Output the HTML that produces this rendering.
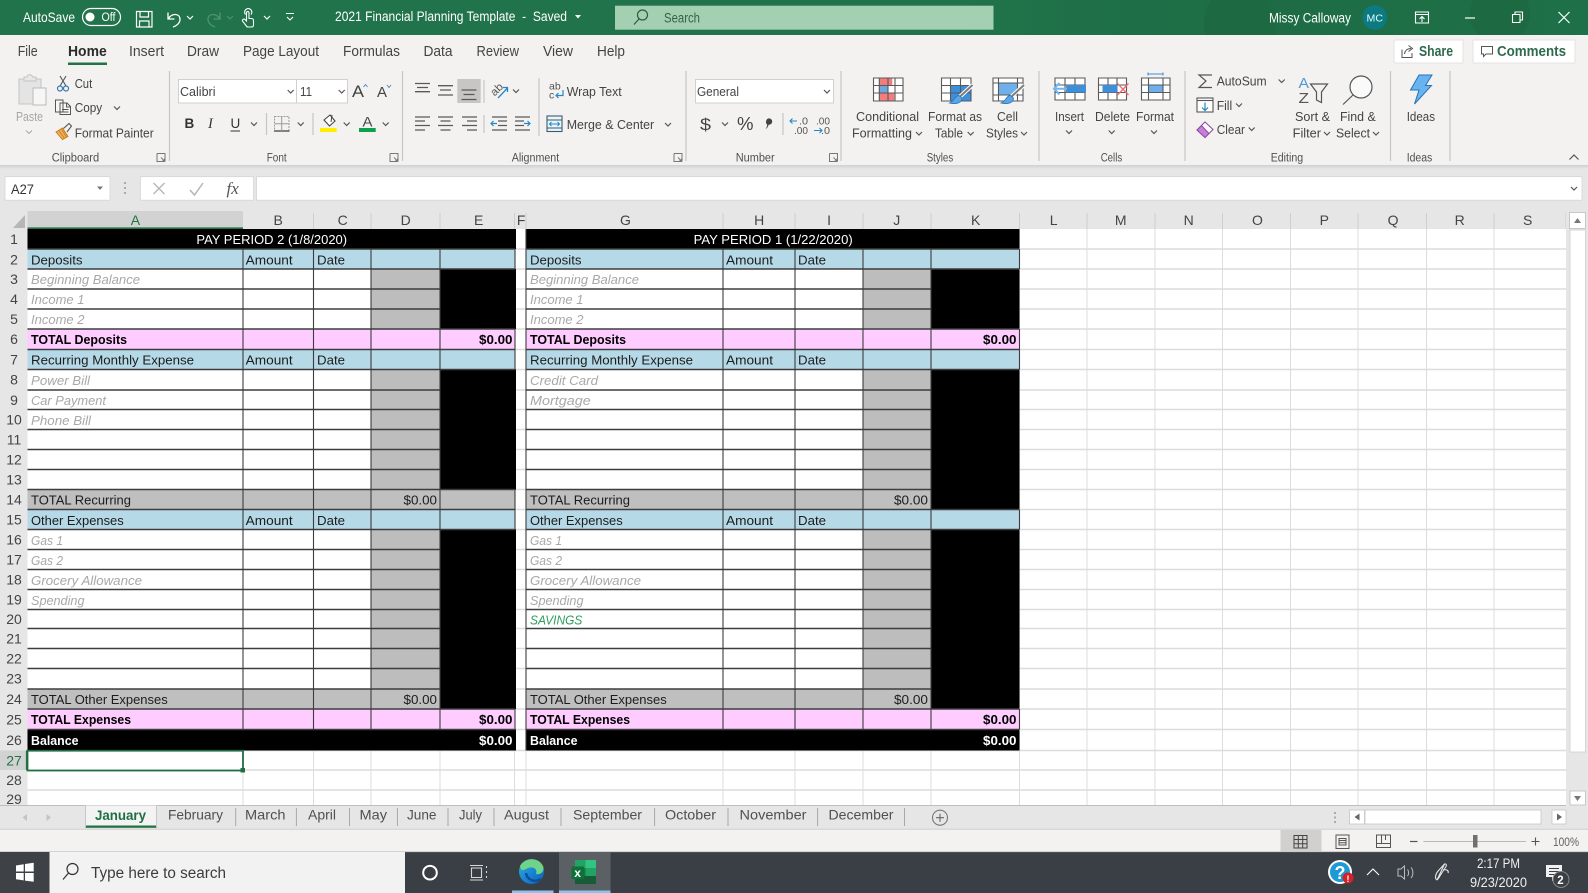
<!DOCTYPE html>
<html lang="en"><head><meta charset="utf-8"><title>2021 Financial Planning Template - Excel</title>
<style>
html,body{margin:0;padding:0;background:#f3f2f1;overflow:hidden;width:1588px;height:893px}
svg{display:block}
text{font-family:"Liberation Sans",sans-serif}
.c{font-size:13px;fill:#1c1c1c}
.i{font-size:13px;fill:#a8a8a8;font-style:italic}
.b{font-size:13px;fill:#000;font-weight:bold}
.w{font-size:13px;fill:#fff;font-weight:bold}
.h{font-size:14px;fill:#444}
.r{font-size:12.5px;fill:#444}
.l{font-size:11.5px;fill:#505050}
.t{font-size:14.5px;fill:#444}
.s{font-size:14px;fill:#505050}
.k{fill:none;stroke:#555;stroke-width:1.2}
.g{fill:none;stroke:#5a5a5a;stroke-width:1.3}
.se{font-family:"Liberation Serif",serif}
</style></head><body>
<svg xmlns="http://www.w3.org/2000/svg" width="1588" height="893" viewBox="0 0 1588 893">
<defs>
<path id="ch" d="M-3 -1.5L0 1.5L3 -1.5" fill="none" stroke="#555" stroke-width="1.2"/>
<path id="cw" d="M-3 -1.5L0 1.5L3 -1.5" fill="none" stroke="#fff" stroke-width="1.2"/>
<path id="la" d="M-4 -4H4V4M-4 -4V4H4M0 0L3.5 3.5M3.5 1V3.5H1" fill="none" stroke="#777" stroke-width="1"/>
<linearGradient id="sh" x1="0" y1="0" x2="0" y2="1"><stop offset="0" stop-color="#cfcfcf"/><stop offset="1" stop-color="#e6e6e6"/></linearGradient>
<linearGradient id="tb" x1="0" y1="0" x2="1" y2="0"><stop offset="0" stop-color="#20734a"/><stop offset=".6" stop-color="#20734a"/><stop offset=".8" stop-color="#1d6c45"/><stop offset="1" stop-color="#1e7048"/></linearGradient>
<linearGradient id="edge" x1="0" y1="0" x2="1" y2="1"><stop offset="0" stop-color="#2fb5c8"/><stop offset=".5" stop-color="#1a86d6"/><stop offset="1" stop-color="#0f5fb0"/></linearGradient>
<clipPath id="tc"><rect width="1588" height="35"/></clipPath>
</defs>

<!-- base -->
<rect width="1588" height="893" fill="#f3f2f1"/>

<!-- title bar -->
<rect width="1588" height="35" fill="url(#tb)"/>
<g clip-path="url(#tc)">
<circle cx="1500" cy="14" r="30" fill="#1c6942"/>
<circle cx="1240" cy="22" r="36" fill="#1c6942"/>
</g>
<text x="23" y="22" font-size="14" fill="#fff" textLength="52" lengthAdjust="spacingAndGlyphs">AutoSave</text>
<rect x="82.5" y="8.5" width="38" height="17" rx="8.5" fill="none" stroke="#fff" stroke-width="1.2"/>
<circle cx="90" cy="17" r="4.5" fill="#fff"/>
<text x="101.5" y="21" font-size="11.5" fill="#fff" textLength="14" lengthAdjust="spacingAndGlyphs">Off</text>
<path d="M136.5 11.5H152V27H136.5ZM140 11.5V17H148.5V11.5M139.5 27V21H149V27" fill="none" stroke="#fff" stroke-width="1.2"/>
<path d="M168 12.5V19H174.5M168.5 18.5C172 13 180 13 180 19.5C180 23 176.5 26 173 27" fill="none" stroke="#fff" stroke-width="1.3"/>
<use href="#cw" x="190" y="17.5"/>
<path d="M220 12.5V19H213.5M219.5 18.5C216 13 208 13 208 19.5C208 23 211.5 26 215 27" fill="none" stroke="#4f9471" stroke-width="1.3"/>
<path d="M227 16L230 19L233 16" fill="none" stroke="#4f9471" stroke-width="1.1"/>
<path d="M245.5 14.5a3.6 3.6 0 1 1 5.5 0M246.5 21V13c0-2 2.500-2 2.500 0V18.500h2.500c1.500 0 2 1 2 2.500V25c0 1.500-1 2-2 2h-3.500c-1 0-1.500-.5-2-1.500L242.500 21c-.5-1.500 1.500-2.500 2.500-1.500Z" fill="none" stroke="#fff" stroke-width="1.1"/>
<use href="#cw" x="267" y="17.5"/>
<path d="M286 13.500H294M287 17L290 20L293 17" fill="none" stroke="#fff" stroke-width="1.1"/>
<text x="335" y="21" font-size="13.500" fill="#fff" textLength="232" lengthAdjust="spacingAndGlyphs">2021 Financial Planning Template &#160;-&#160; Saved</text>
<path d="M575 15H581L578 18.500Z" fill="#fff"/>
<rect x="615" y="5.700" width="378.500" height="24" fill="#a3d0b1"/>
<circle cx="642.500" cy="15" r="5" fill="none" stroke="#2f5a44" stroke-width="1.200"/>
<path d="M639 19L634 24.500" stroke="#2f5a44" stroke-width="1.200"/>
<text x="664" y="22.500" font-size="13.500" fill="#36614a" textLength="36" lengthAdjust="spacingAndGlyphs">Search</text>
<text x="1269" y="22.500" font-size="13.500" fill="#fff" textLength="82" lengthAdjust="spacingAndGlyphs">Missy Calloway</text>
<circle cx="1374.700" cy="17.500" r="12.300" fill="#0d7a82"/>
<text x="1366.500" y="21.500" font-size="10.500" fill="#dff" textLength="16.500" lengthAdjust="spacingAndGlyphs">MC</text>
<path d="M1415.500 12H1428.500V23H1415.500ZM1415.500 14.500H1428.500M1422 22V16.500M1419.500 19L1422 16.500L1424.500 19" fill="none" stroke="#fff" stroke-width="1.100"/>
<path d="M1465 18H1475" stroke="#fff" stroke-width="1.200"/>
<path d="M1512.500 14.500H1520V22.500H1512.500ZM1515 14.500V12H1522.500V20H1520" fill="none" stroke="#fff" stroke-width="1.100"/>
<path d="M1558.500 12L1569.500 23M1569.500 12L1558.500 23" stroke="#fff" stroke-width="1.200"/>

<!-- ribbon tabs -->
<text class="t" x="17.700" y="56" textLength="20" lengthAdjust="spacingAndGlyphs">File</text>
<text class="t" x="68" y="56" textLength="38.700" lengthAdjust="spacingAndGlyphs" style="fill:#2b2b2b;font-weight:bold">Home</text>
<rect x="68" y="62.500" width="39" height="2.500" fill="#217346"/>
<text class="t" x="129" y="56" textLength="35" lengthAdjust="spacingAndGlyphs">Insert</text>
<text class="t" x="187" y="56" textLength="32" lengthAdjust="spacingAndGlyphs">Draw</text>
<text class="t" x="243" y="56" textLength="76" lengthAdjust="spacingAndGlyphs">Page Layout</text>
<text class="t" x="343" y="56" textLength="57" lengthAdjust="spacingAndGlyphs">Formulas</text>
<text class="t" x="423.500" y="56" textLength="29" lengthAdjust="spacingAndGlyphs">Data</text>
<text class="t" x="476.500" y="56" textLength="42.500" lengthAdjust="spacingAndGlyphs">Review</text>
<text class="t" x="543" y="56" textLength="30" lengthAdjust="spacingAndGlyphs">View</text>
<text class="t" x="597" y="56" textLength="28" lengthAdjust="spacingAndGlyphs">Help</text>
<rect x="1394" y="40" width="69" height="23" rx="1" fill="#fff" stroke="#e4e2e0"/>
<path d="M1402 49.500V57.500H1412V53M1404.500 54C1405 50.500 1407.500 48.500 1411 48.500M1408.500 45.500L1412.500 48.500L1408.500 51.500" fill="none" stroke="#555" stroke-width="1"/>
<text x="1419" y="56" font-size="14.500" font-weight="bold" fill="#2f6a4d" textLength="34" lengthAdjust="spacingAndGlyphs">Share</text>
<rect x="1473" y="40" width="102" height="23" rx="1" fill="#fff" stroke="#e4e2e0"/>
<path d="M1481.500 46.500H1492.500V54H1486L1483.500 56.500V54H1481.500Z" fill="none" stroke="#555" stroke-width="1"/>
<text x="1497" y="56" font-size="14.500" font-weight="bold" fill="#2f6a4d" textLength="69" lengthAdjust="spacingAndGlyphs">Comments</text>

<!-- ribbon separators -->
<path d="M169.500 71V161M402.500 71V161M484 80V103M484 115V133M539 78V136M686 71V161M783 113V135M841 71V161M1039 71V161M1185 71V161M1390.500 71V161M1450 71V161M266.500 113V135M313 113V135" stroke="#c8c6c4" stroke-width="1.200" fill="none"/>

<!-- clipboard -->
<rect x="19" y="79" width="22" height="25" fill="#e4e4e4" stroke="#c4c4c4"/>
<path d="M24 80V77H27C27.500 74 32 74 32.500 77H36V81H24Z" fill="#e8e8e8" stroke="#c4c4c4"/>
<rect x="33" y="88" width="13" height="17" fill="#f6f6f6" stroke="#bbb"/>
<text x="16" y="121" font-size="12.500" fill="#a6a6a6" textLength="27" lengthAdjust="spacingAndGlyphs">Paste</text>
<path d="M26 130.500L29 133.500L32 130.500" fill="none" stroke="#aaa" stroke-width="1.100"/>
<path d="M60 76L66 86M66 76L60 86" stroke="#555" stroke-width="1.100"/>
<circle cx="60" cy="88.500" r="2.500" fill="none" stroke="#3a78b8" stroke-width="1.200"/><circle cx="66" cy="88.500" r="2.500" fill="none" stroke="#3a78b8" stroke-width="1.200"/>
<text class="r" x="74.700" y="88" textLength="17.500" lengthAdjust="spacingAndGlyphs">Cut</text>
<path d="M55.500 100H63V112H55.500ZM60 103H67L70.500 106.500V114.500H60ZM66.500 103V107H70.500M62 109.500H68.500M62 112H68.500" fill="#f7f7f7" stroke="#555" stroke-width="1"/>
<text class="r" x="74.700" y="112" textLength="27.500" lengthAdjust="spacingAndGlyphs">Copy</text>
<use href="#ch" x="117" y="108"/>
<path d="M56 132L62.500 128L68 136.500L62.500 139.500Z" fill="#eeb05a" stroke="#c77b1d" stroke-width=".9"/>
<path d="M59 130.500L64.500 138.500M61.500 129L66.500 137" stroke="#c77b1d" stroke-width=".8"/>
<path d="M63.500 128.500L69 123.500L71.500 126L67 132" fill="none" stroke="#555" stroke-width="1.100"/>
<text class="r" x="74.700" y="137.500" textLength="79" lengthAdjust="spacingAndGlyphs">Format Painter</text>
<text class="l" x="51.700" y="161.500" textLength="47.500" lengthAdjust="spacingAndGlyphs">Clipboard</text>
<use href="#la" x="161" y="157.500"/>

<!-- font -->
<rect x="178.500" y="79.500" width="118" height="23.500" fill="#fff" stroke="#d2d0ce"/>
<rect x="296.500" y="79.500" width="51" height="23.500" fill="#fff" stroke="#d2d0ce"/>
<text class="r" x="180" y="96" textLength="35.500" lengthAdjust="spacingAndGlyphs">Calibri</text>
<use href="#ch" x="290.700" y="91.500"/>
<text class="r" x="300" y="96" textLength="12" lengthAdjust="spacingAndGlyphs">11</text>
<use href="#ch" x="341.700" y="91.500"/>
<text x="352" y="97" font-size="17" fill="#444" textLength="12" lengthAdjust="spacingAndGlyphs">A</text>
<path d="M363.500 87L365.500 84.500L367.500 87" fill="none" stroke="#4a8ec4" stroke-width="1"/>
<text x="377" y="97" font-size="14.500" fill="#444" textLength="10" lengthAdjust="spacingAndGlyphs">A</text>
<path d="M387 85L389 87.500L391 85" fill="none" stroke="#4a8ec4" stroke-width="1"/>
<text x="184.500" y="128" font-size="13.500" font-weight="bold" fill="#333">B</text>
<text class="se" x="208" y="128" font-size="14.500" font-style="italic" fill="#333">I</text>
<text x="230.500" y="128" font-size="13.500" fill="#333">U</text>
<path d="M230.500 131H240" stroke="#333" stroke-width="1"/>
<use href="#ch" x="254" y="124"/>
<path d="M274.500 116.500H289V131H274.500Z" fill="none" stroke="#9a9a9a" stroke-width="1" stroke-dasharray="2 1"/>
<path d="M274 131H289.500" stroke="#444" stroke-width="1.300"/>
<path d="M281.700 117V131M275 123.700H288.500" stroke="#9a9a9a" stroke-width="1"/>
<use href="#ch" x="300.700" y="124"/>
<path d="M324 120L330 115L335 121L329.500 126Z" fill="#fff" stroke="#444" stroke-width="1.100"/>
<path d="M332 115L331 122" stroke="#444" stroke-width="1"/>
<rect x="320" y="128" width="16.700" height="4" fill="#ffee00"/>
<use href="#ch" x="346.700" y="124"/>
<text x="362.500" y="126.500" font-size="14" fill="#444" textLength="10" lengthAdjust="spacingAndGlyphs">A</text>
<rect x="359" y="128" width="16.700" height="4" fill="#0fa04c"/>
<use href="#ch" x="385.700" y="124"/>
<text class="l" x="266.700" y="161.500" textLength="20" lengthAdjust="spacingAndGlyphs">Font</text>
<use href="#la" x="394" y="157.500"/>

<!-- alignment -->
<rect x="457.300" y="79" width="23.400" height="24" fill="#c8c6c4"/>
<path class="g" d="M415 83.500H430M417 87.500H428M415 91.700H430M438 85.700H453M440 90H451M438 95H453M461.500 90H476.500M463.500 94.500H474.500M461.500 99.500H476.500"/>
<path class="g" d="M415 117H430M415 121H425M415 125.500H430M415 130H425M438 117H453M440.500 121H450.500M438 125.500H453M440.500 130H450.500M462 117H477M467 121H477M462 125.500H477M467 130H477M492 117H507M498 121H507M498 125.500H507M492 130H507M515 117H530M515 121H524M515 125.500H524M515 130H530"/>
<path d="M491 123.500H497M493.500 121L491 123.500L493.500 126M524 123.500H530M527.500 121L530 123.500L527.500 126" fill="none" stroke="#2487c8" stroke-width="1.200"/>
<text x="491.500" y="95" font-size="11" fill="#555" transform="rotate(-45 495 92)" textLength="13" lengthAdjust="spacingAndGlyphs">ab</text>
<path d="M498 98L507.500 88M503 87.500H507.500V92" fill="none" stroke="#2487c8" stroke-width="1.300"/>
<use href="#ch" x="516" y="91"/>
<text x="549" y="89.500" font-size="10.500" fill="#555">ab</text>
<text x="549" y="98.500" font-size="10.500" fill="#555">c</text>
<path d="M563 90V95.500H556M558.500 93L556 95.500L558.500 98" fill="none" stroke="#2487c8" stroke-width="1.200"/>
<text class="r" x="566.700" y="96" textLength="55" lengthAdjust="spacingAndGlyphs">Wrap Text</text>
<rect x="547" y="116" width="15" height="15.500" fill="#eaf4fb" stroke="#3a5a70" stroke-width="1.100"/>
<path d="M547 120H562M547 128H562" stroke="#3a5a70" stroke-width="1"/>
<path d="M549.500 124H559.500M551.500 122L549.500 124L551.500 126M557.500 122L559.500 124L557.500 126" fill="none" stroke="#2487c8" stroke-width="1"/>
<text class="r" x="566.700" y="129" textLength="87.500" lengthAdjust="spacingAndGlyphs">Merge &amp; Center</text>
<use href="#ch" x="668" y="124.500"/>
<text class="l" x="511.700" y="161.500" textLength="47.500" lengthAdjust="spacingAndGlyphs">Alignment</text>
<use href="#la" x="678" y="157.500"/>

<!-- number -->
<rect x="695.500" y="79.500" width="138" height="23.500" fill="#fff" stroke="#d2d0ce"/>
<text class="r" x="697" y="96" textLength="42" lengthAdjust="spacingAndGlyphs">General</text>
<use href="#ch" x="827" y="91.500"/>
<text x="700" y="130" font-size="17" fill="#444" textLength="11" lengthAdjust="spacingAndGlyphs">$</text>
<use href="#ch" x="725" y="124"/>
<text x="737" y="130" font-size="18" fill="#444" textLength="16.500" lengthAdjust="spacingAndGlyphs">%</text>
<path d="M768 118.500a3.200 3.200 0 1 1 .5 6.200c-.2 2-1.500 3.500-3 4.500c1-1.500 1.700-3 1.700-4.700c-1.700-.8-1.800-4.800.8-6Z" fill="#444"/>
<text x="799" y="124.500" font-size="10.500" fill="#555" textLength="9" lengthAdjust="spacingAndGlyphs">.0</text>
<text x="794" y="134" font-size="10.500" fill="#555" textLength="14" lengthAdjust="spacingAndGlyphs">.00</text>
<path d="M790 121H797M792.500 118.500L790 121L792.500 123.500" fill="none" stroke="#2487c8" stroke-width="1.100"/>
<text x="816" y="124.500" font-size="10.500" fill="#555" textLength="14" lengthAdjust="spacingAndGlyphs">.00</text>
<text x="821" y="134" font-size="10.500" fill="#555" textLength="9" lengthAdjust="spacingAndGlyphs">.0</text>
<path d="M814 130.500H822M819.500 128L822 130.500L819.500 133" fill="none" stroke="#2487c8" stroke-width="1.100"/>
<text class="l" x="735.700" y="161.500" textLength="39" lengthAdjust="spacingAndGlyphs">Number</text>
<use href="#la" x="833.500" y="157.500"/>

<!-- styles: conditional -->
<rect x="873.500" y="78" width="29.500" height="23" fill="#fff"/>
<rect x="879.300" y="78" width="13" height="7.500" fill="#f47c7c"/>
<rect x="879.300" y="85.500" width="9" height="7.500" fill="#6ea8dc"/>
<rect x="879.300" y="93" width="15" height="8" fill="#f47c7c"/>
<path d="M873.500 78H903V101H873.500ZM873.500 85.500H903M873.500 93H903M879.300 78V101M888 78V101M895 78V101" fill="none" stroke="#5a5a5a" stroke-width="1.100"/>
<text class="r" x="856" y="121" textLength="63" lengthAdjust="spacingAndGlyphs">Conditional</text>
<text class="r" x="852" y="137.500" textLength="60" lengthAdjust="spacingAndGlyphs">Formatting</text>
<use href="#ch" x="919" y="133.500"/>
<!-- format as table -->
<rect x="941.500" y="78" width="29.500" height="23" fill="#fff"/>
<rect x="950.500" y="85.500" width="20.500" height="15.500" fill="#3d8fd9"/>
<path d="M941.500 78H971V101H941.500ZM941.500 85.500H971M941.500 93H971M950.500 78V101M960.500 78V101" fill="none" stroke="#5a5a5a" stroke-width="1.100"/>
<path d="M972.500 85L958.500 98" stroke="#fff" stroke-width="4"/>
<path d="M972.500 85L958.500 98" stroke="#7d7d7d" stroke-width="2"/>
<path d="M959 95.500C954 96 955 101 949.500 103C956 104.500 962 103 962 98Z" fill="#5aa6e6" stroke="#2b72b5" stroke-width=".8"/>
<text class="r" x="928" y="121" textLength="54" lengthAdjust="spacingAndGlyphs">Format as</text>
<text class="r" x="935" y="137.500" textLength="28" lengthAdjust="spacingAndGlyphs">Table</text>
<use href="#ch" x="970.700" y="133.500"/>
<!-- cell styles -->
<rect x="993" y="78" width="30" height="23" fill="#fff"/>
<rect x="998.500" y="83" width="19" height="12" fill="#6db0ec"/>
<path d="M993 78H1023V101H993ZM993 83H1023M993 95H1023M998.500 78V101M1017.500 78V101" fill="none" stroke="#5a5a5a" stroke-width="1.100"/>
<path d="M1024 85L1010 98" stroke="#fff" stroke-width="4"/>
<path d="M1024 85L1010 98" stroke="#7d7d7d" stroke-width="2"/>
<path d="M1010.500 95.500C1005.500 96 1006.500 101 1001 103C1007.500 104.500 1013.500 103 1013.500 98Z" fill="#5aa6e6" stroke="#2b72b5" stroke-width=".8"/>
<text class="r" x="997" y="121" textLength="21" lengthAdjust="spacingAndGlyphs">Cell</text>
<text class="r" x="986" y="137.500" textLength="32" lengthAdjust="spacingAndGlyphs">Styles</text>
<use href="#ch" x="1024" y="133.500"/>
<text class="l" x="926.700" y="161.500" textLength="26.500" lengthAdjust="spacingAndGlyphs">Styles</text>

<!-- cells -->
<rect x="1055" y="78" width="30" height="22" fill="#fff"/>
<path d="M1055 78H1085V100H1055ZM1055 85H1085M1055 92.500H1085M1065 78V100M1075 78V100" fill="none" stroke="#5a5a5a" stroke-width="1.100"/>
<rect x="1066" y="85" width="20" height="7.500" fill="#3d8fd9"/>
<path d="M1054 88.700H1067M1059.500 83L1054 88.700L1059.500 94.500" fill="none" stroke="#6eb6ee" stroke-width="2"/>
<rect x="1098.500" y="78" width="28" height="22" fill="#fff"/>
<path d="M1098.500 78H1126.500V100H1098.500ZM1098.500 85H1126.500M1098.500 92.500H1126.500M1108 78V100M1117 78V100" fill="none" stroke="#5a5a5a" stroke-width="1.100"/>
<rect x="1102.500" y="85" width="15" height="7.500" fill="#3d8fd9"/>
<path d="M1117.500 83.500L1128.500 95M1128.500 83.500L1117.500 95" stroke="#ee6e6e" stroke-width="1.400"/>
<rect x="1141.500" y="78" width="28.500" height="22" fill="#fff"/>
<rect x="1148.500" y="85" width="14.500" height="7.500" fill="#6db0ec"/>
<path d="M1141.500 78H1170V100H1141.500ZM1141.500 85H1170M1141.500 92.500H1170M1148.500 78V100M1163 78V100" fill="none" stroke="#5a5a5a" stroke-width="1.100"/>
<path d="M1148 74H1163M1148 72.500V75.500M1163 72.500V75.500" stroke="#3d8fd9" stroke-width="1.100"/>
<text class="r" x="1055" y="121" textLength="29" lengthAdjust="spacingAndGlyphs">Insert</text>
<text class="r" x="1095" y="121" textLength="35" lengthAdjust="spacingAndGlyphs">Delete</text>
<text class="r" x="1136" y="121" textLength="38" lengthAdjust="spacingAndGlyphs">Format</text>
<use href="#ch" x="1069" y="132"/><use href="#ch" x="1111.700" y="132"/><use href="#ch" x="1154" y="132"/>
<text class="l" x="1100.700" y="161.500" textLength="21.500" lengthAdjust="spacingAndGlyphs">Cells</text>

<!-- editing -->
<path d="M1212 75H1199L1206 81L1199 87.500H1212" fill="none" stroke="#555" stroke-width="1.200"/>
<text class="r" x="1216.700" y="85.500" textLength="50" lengthAdjust="spacingAndGlyphs">AutoSum</text>
<use href="#ch" x="1281.700" y="81"/>
<rect x="1197" y="98" width="16" height="14" fill="#fff" stroke="#555" stroke-width="1.100"/>
<path d="M1197 100.500H1213" stroke="#555" stroke-width="1.100"/>
<path d="M1205 102.500V110M1202 107.500L1205 110.500L1208 107.500" fill="none" stroke="#2487c8" stroke-width="1.200"/>
<text class="r" x="1216.700" y="110" textLength="15.500" lengthAdjust="spacingAndGlyphs">Fill</text>
<use href="#ch" x="1239" y="105"/>
<path d="M1197 130L1205 122L1213 129.500L1205 137.500Z" fill="#fff" stroke="#8a4fa8" stroke-width="1.100"/>
<path d="M1197 130L1201.500 125.500L1209 133.500L1205 137.500Z" fill="#c77ed4" stroke="#8a4fa8" stroke-width="1"/>
<text class="r" x="1216.700" y="134" textLength="28.300" lengthAdjust="spacingAndGlyphs">Clear</text>
<use href="#ch" x="1251.700" y="129"/>
<text x="1298.500" y="88" font-size="14.500" fill="#4a9ad8" textLength="10.500" lengthAdjust="spacingAndGlyphs">A</text>
<text x="1298.500" y="103" font-size="14.500" fill="#555" textLength="10.500" lengthAdjust="spacingAndGlyphs">Z</text>
<path d="M1310.500 84H1327.500L1321.500 92V102.500L1316.500 100V92Z" fill="none" stroke="#555" stroke-width="1.200"/>
<text class="r" x="1295" y="121" textLength="35" lengthAdjust="spacingAndGlyphs">Sort &amp;</text>
<text class="r" x="1292.700" y="137.500" textLength="28.300" lengthAdjust="spacingAndGlyphs">Filter</text>
<use href="#ch" x="1327" y="133.500"/>
<circle cx="1361" cy="87" r="11" fill="#fafafa" stroke="#555" stroke-width="1.200"/>
<path d="M1353 95L1343 104.500" stroke="#555" stroke-width="1.200"/>
<text class="r" x="1340" y="121" textLength="35.700" lengthAdjust="spacingAndGlyphs">Find &amp;</text>
<text class="r" x="1336" y="137.500" textLength="34" lengthAdjust="spacingAndGlyphs">Select</text>
<use href="#ch" x="1376" y="133.500"/>
<text class="l" x="1270.700" y="161.500" textLength="32.500" lengthAdjust="spacingAndGlyphs">Editing</text>
<path d="M1419 75H1432L1425.500 85.500H1431.500L1414.500 104L1419 90H1410.500Z" fill="#68b4f0" stroke="#2b72b5" stroke-width="1"/>
<text class="r" x="1406.700" y="121" textLength="28.300" lengthAdjust="spacingAndGlyphs">Ideas</text>
<text class="l" x="1406.700" y="161.500" textLength="25.600" lengthAdjust="spacingAndGlyphs">Ideas</text>
<path d="M1569.500 159.500L1574 155L1578.500 159.500" fill="none" stroke="#555" stroke-width="1.200"/>

<!-- formula bar -->
<rect y="165" width="1588" height="46" fill="#e6e6e6"/>
<rect y="165" width="1588" height="4" fill="url(#sh)"/>
<rect x="5" y="176.700" width="105" height="23.500" fill="#fff" stroke="#d6d6d6" stroke-width=".8"/>
<text x="11" y="194" font-size="13.500" fill="#333" textLength="23" lengthAdjust="spacingAndGlyphs">A27</text>
<path d="M97 186.500H103L100 190Z" fill="#777"/>
<path d="M125 182V184M125 187V189M125 192V194" stroke="#aaa" stroke-width="2"/>
<rect x="140.500" y="176.700" width="113" height="23.500" fill="#fff" stroke="#d6d6d6" stroke-width=".8"/>
<path d="M153.500 183L164.500 194M164.500 183L153.500 194" stroke="#b5b5b5" stroke-width="1.300"/>
<path d="M190 190L194.500 195L203 183" fill="none" stroke="#b5b5b5" stroke-width="1.500"/>
<text class="se" x="226.500" y="194" font-size="17" font-style="italic" fill="#555">fx</text>
<rect x="256.600" y="176.700" width="1325.400" height="23.500" fill="#fff" stroke="#d6d6d6" stroke-width=".8"/>
<use href="#ch" x="1574" y="188.500"/>

<!-- column headers -->
<rect y="211" width="1566" height="18" fill="#e6e6e6"/>
<rect x="27.500" y="211" width="215.500" height="18" fill="#d2d2d2"/>
<path d="M27.500 228.200H243" stroke="#217346" stroke-width="1.600"/>
<path d="M13 228L25 228L25 215Z" fill="#b6b6b6"/>
<path d="M313.500 213V229M371 213V229M440 213V229M514.500 213V229M526 213V229M723 213V229M795 213V229M863 213V229M931 213V229M1019.500 213V229M1087 213V229M1155 213V229M1222.500 213V229M1290.500 213V229M1358 213V229M1426.500 213V229M1494 213V229M1566 213V229" stroke="#cfcfcf"/>
<g class="h" text-anchor="middle" transform="translate(.7 0)">
<text x="134.700" y="225" style="fill:#217346">A</text><text x="277.500" y="225">B</text><text x="342" y="225">C</text><text x="405" y="225">D</text><text x="478" y="225">E</text><text x="520.500" y="225">F</text><text x="624.800" y="225">G</text><text x="758.500" y="225">H</text><text x="828.400" y="225">I</text><text x="896" y="225">J</text><text x="975" y="225">K</text><text x="1053" y="225">L</text><text x="1120" y="225">M</text><text x="1188" y="225">N</text><text x="1256.700" y="225">O</text><text x="1323.600" y="225">P</text><text x="1392.400" y="225">Q</text><text x="1459" y="225">R</text><text x="1527" y="225">S</text>
</g>

<!-- row headers -->
<rect y="229" width="27.500" height="576" fill="#e6e6e6"/>
<rect y="750.500" width="27.500" height="19.500" fill="#d2d2d2"/>
<path d="M26.700 750.500V770" stroke="#217346" stroke-width="1.600"/>
<g class="h" text-anchor="middle" transform="translate(.4 0)">
<text x="13.600" y="244">1</text><text x="13.600" y="264.500">2</text><text x="13.600" y="284">3</text><text x="13.600" y="304">4</text><text x="13.600" y="324">5</text><text x="13.600" y="344">6</text><text x="13.600" y="364.500">7</text><text x="13.600" y="384.500">8</text><text x="13.600" y="405">9</text><text x="13.600" y="424.500">10</text><text x="13.600" y="444.500">11</text><text x="13.600" y="464.500">12</text><text x="13.600" y="484.500">13</text><text x="13.600" y="504.500">14</text><text x="13.600" y="524.500">15</text><text x="13.600" y="544.500">16</text><text x="13.600" y="564.500">17</text><text x="13.600" y="584.500">18</text><text x="13.600" y="604.500">19</text><text x="13.600" y="624">20</text><text x="13.600" y="643.500">21</text><text x="13.600" y="663.500">22</text><text x="13.600" y="683.500">23</text><text x="13.600" y="704">24</text><text x="13.600" y="724.500">25</text><text x="13.600" y="745">26</text><text x="13.600" y="765.500" style="fill:#217346">27</text><text x="13.600" y="785">28</text><text x="13.600" y="804">29</text>
</g>

<!-- sheet -->
<rect x="27.500" y="229" width="1538.500" height="576" fill="#fff"/>
<path d="M27.500 249H1566M27.500 269H1566M27.500 289H1566M27.500 309H1566M27.500 329H1566M27.500 349.500H1566M27.500 369.500H1566M27.500 390H1566M27.500 409.500H1566M27.500 429.500H1566M27.500 449.500H1566M27.500 469.500H1566M27.500 489.500H1566M27.500 509.500H1566M27.500 529.500H1566M27.500 549.500H1566M27.500 569.500H1566M27.500 589.500H1566M27.500 609.500H1566M27.500 628.500H1566M27.500 648.500H1566M27.500 668.500H1566M27.500 689H1566M27.500 709H1566M27.500 729.500H1566M27.500 750.500H1566M27.500 770H1566M27.500 790H1566" stroke="#dcdcdc" stroke-width="1.500" fill="none"/>
<path d="M243 229V805M313.500 229V805M371 229V805M440 229V805M514.500 229V805M526 229V805M723 229V805M795 229V805M863 229V805M931 229V805M1019.500 229V805M1087 229V805M1155 229V805M1222.500 229V805M1290.500 229V805M1358 229V805M1426.500 229V805M1494 229V805" stroke="#dcdcdc" stroke-width="1" fill="none"/>

<!-- table 1 fills -->
<g>
<rect x="27.500" y="229" width="488.500" height="20" fill="#000"/>
<rect x="27.500" y="249" width="487.500" height="20" fill="#b5d9e7"/>
<rect x="27.500" y="349.500" width="487.500" height="20" fill="#b5d9e7"/>
<rect x="27.500" y="509.500" width="487.500" height="20" fill="#b5d9e7"/>
<rect x="27.500" y="269" width="412.500" height="60" fill="#fff"/>
<rect x="27.500" y="369.500" width="412.500" height="120" fill="#fff"/>
<rect x="27.500" y="529.500" width="412.500" height="159.500" fill="#fff"/>
<rect x="27.500" y="329" width="487.500" height="20.500" fill="#ffccff"/>
<rect x="27.500" y="709" width="487.500" height="20.500" fill="#ffccff"/>
<rect x="371" y="269" width="69" height="60" fill="#bdbdbd"/>
<rect x="371" y="369.500" width="69" height="120" fill="#bdbdbd"/>
<rect x="371" y="529.500" width="69" height="159.500" fill="#bdbdbd"/>
<rect x="440" y="269" width="76" height="60" fill="#000"/>
<rect x="440" y="369.500" width="76" height="120" fill="#000"/>
<rect x="440" y="529.500" width="76" height="179.500" fill="#000"/>
<rect x="27.500" y="489.500" width="487.500" height="20" fill="#bfbfbf"/>
<rect x="27.500" y="689" width="412.500" height="20" fill="#bfbfbf"/>
<rect x="27.500" y="729.500" width="488.500" height="21" fill="#000"/>
</g>
<!-- table 2 fills -->
<g>
<rect x="526" y="229" width="493.500" height="20" fill="#000"/>
<rect x="526" y="249" width="493.500" height="20" fill="#b5d9e7"/>
<rect x="526" y="349.500" width="493.500" height="20" fill="#b5d9e7"/>
<rect x="526" y="509.500" width="493.500" height="20" fill="#b5d9e7"/>
<rect x="526" y="329" width="493.500" height="20.500" fill="#ffccff"/>
<rect x="526" y="709" width="493.500" height="20.500" fill="#ffccff"/>
<rect x="526" y="269" width="405" height="60" fill="#fff"/>
<rect x="526" y="369.500" width="405" height="120" fill="#fff"/>
<rect x="526" y="529.500" width="405" height="159.500" fill="#fff"/>
<rect x="863" y="269" width="68" height="60" fill="#bdbdbd"/>
<rect x="863" y="369.500" width="68" height="120" fill="#bdbdbd"/>
<rect x="863" y="529.500" width="68" height="159.500" fill="#bdbdbd"/>
<rect x="931" y="269" width="88.500" height="60" fill="#000"/>
<rect x="931" y="369.500" width="88.500" height="140" fill="#000"/>
<rect x="931" y="529.500" width="88.500" height="179.500" fill="#000"/>
<rect x="526" y="489.500" width="405" height="20" fill="#bfbfbf"/>
<rect x="526" y="689" width="405" height="20" fill="#bfbfbf"/>
<rect x="526" y="729.500" width="493.500" height="21" fill="#000"/>
</g>
<!-- dark borders -->
<path d="M27.500 249H515M27.500 269H515M27.500 289H440M27.500 309H440M27.500 329H515M27.500 349.500H515M27.500 369.500H515M27.500 390H440M27.500 409.500H440M27.500 429.500H440M27.500 449.500H440M27.500 469.500H440M27.500 489.500H515M27.500 509.500H515M27.500 529.500H515M27.500 549.500H440M27.500 569.500H440M27.500 589.500H440M27.500 609.500H440M27.500 628.500H440M27.500 648.500H440M27.500 668.500H440M27.500 689H440M27.500 709H515M27.500 729.500H515" stroke="#3d3d3d" stroke-width="1.500" fill="none"/>
<path d="M243 249V729.500M313.500 249V729.500M371 249V729.500M440 249V729.500M515 249V269M515 329V369.500M515 489.500V529.500M515 709V729.500" stroke="#3d3d3d" stroke-width="1.100" fill="none"/>
<path d="M526 249H1019.500M526 269H1019.500M526 289H931M526 309H931M526 329H1019.500M526 349.500H1019.500M526 369.500H1019.500M526 390H931M526 409.500H931M526 429.500H931M526 449.500H931M526 469.500H931M526 489.500H931M526 509.500H1019.500M526 529.500H1019.500M526 549.500H931M526 569.500H931M526 589.500H931M526 609.500H931M526 628.500H931M526 648.500H931M526 668.500H931M526 689H931M526 709H1019.500M526 729.500H1019.500" stroke="#3d3d3d" stroke-width="1.500" fill="none"/>
<path d="M526 229V750.500M723 249V729.500M795 249V729.500M863 249V729.500M931 249V729.500M1019.500 249V269M1019.500 329V369.500M1019.500 509.500V529.500M1019.500 709V729.500" stroke="#3d3d3d" stroke-width="1.100" fill="none"/>

<!-- table 1 text -->
<text x="196.400" y="244" font-size="13" fill="#fff" textLength="150.700" lengthAdjust="spacingAndGlyphs">PAY PERIOD 2 (1/8/2020)</text>
<text class="c" x="31" y="264.500" textLength="51.500" lengthAdjust="spacingAndGlyphs">Deposits</text>
<text class="c" x="245.700" y="264.500" textLength="47" lengthAdjust="spacingAndGlyphs">Amount</text>
<text class="c" x="317" y="264.500" textLength="28" lengthAdjust="spacingAndGlyphs">Date</text>
<text class="i" x="31" y="284" textLength="109" lengthAdjust="spacingAndGlyphs">Beginning Balance</text>
<text class="i" x="31" y="304" textLength="53.500" lengthAdjust="spacingAndGlyphs">Income 1</text>
<text class="i" x="31" y="324" textLength="53.500" lengthAdjust="spacingAndGlyphs">Income 2</text>
<text class="b" x="31" y="344" textLength="96" lengthAdjust="spacingAndGlyphs">TOTAL Deposits</text>
<text class="b" x="479" y="344" textLength="33.500" lengthAdjust="spacingAndGlyphs">$0.00</text>
<text class="c" x="31" y="364.500" textLength="163" lengthAdjust="spacingAndGlyphs">Recurring Monthly Expense</text>
<text class="c" x="245.700" y="364.500" textLength="47" lengthAdjust="spacingAndGlyphs">Amount</text>
<text class="c" x="317" y="364.500" textLength="28" lengthAdjust="spacingAndGlyphs">Date</text>
<text class="i" x="31" y="385" textLength="59" lengthAdjust="spacingAndGlyphs">Power Bill</text>
<text class="i" x="31" y="405" textLength="75" lengthAdjust="spacingAndGlyphs">Car Payment</text>
<text class="i" x="31" y="425" textLength="60" lengthAdjust="spacingAndGlyphs">Phone Bill</text>
<text class="c" x="31" y="504.500" textLength="100" lengthAdjust="spacingAndGlyphs">TOTAL Recurring</text>
<text class="c" x="403.500" y="504.500" textLength="33.500" lengthAdjust="spacingAndGlyphs">$0.00</text>
<text class="c" x="31" y="525" textLength="92.700" lengthAdjust="spacingAndGlyphs">Other Expenses</text>
<text class="c" x="245.700" y="525" textLength="47" lengthAdjust="spacingAndGlyphs">Amount</text>
<text class="c" x="317" y="525" textLength="28" lengthAdjust="spacingAndGlyphs">Date</text>
<text class="i" x="31" y="545" textLength="32" lengthAdjust="spacingAndGlyphs">Gas 1</text>
<text class="i" x="31" y="565" textLength="32" lengthAdjust="spacingAndGlyphs">Gas 2</text>
<text class="i" x="31" y="585" textLength="111" lengthAdjust="spacingAndGlyphs">Grocery Allowance</text>
<text class="i" x="31" y="605" textLength="53.500" lengthAdjust="spacingAndGlyphs">Spending</text>
<text class="c" x="31" y="704" textLength="136.700" lengthAdjust="spacingAndGlyphs">TOTAL Other Expenses</text>
<text class="c" x="403.500" y="704" textLength="33.500" lengthAdjust="spacingAndGlyphs">$0.00</text>
<text class="b" x="31" y="724" textLength="100" lengthAdjust="spacingAndGlyphs">TOTAL Expenses</text>
<text class="b" x="479" y="724" textLength="33.500" lengthAdjust="spacingAndGlyphs">$0.00</text>
<text class="w" x="31" y="745" textLength="47.500" lengthAdjust="spacingAndGlyphs">Balance</text>
<text class="w" x="479" y="745" textLength="33.500" lengthAdjust="spacingAndGlyphs">$0.00</text>

<!-- table 2 text -->
<text x="693.700" y="244" font-size="13" fill="#fff" textLength="159" lengthAdjust="spacingAndGlyphs">PAY PERIOD 1 (1/22/2020)</text>
<text class="c" x="530" y="264.500" textLength="51.500" lengthAdjust="spacingAndGlyphs">Deposits</text>
<text class="c" x="726" y="264.500" textLength="47" lengthAdjust="spacingAndGlyphs">Amount</text>
<text class="c" x="798" y="264.500" textLength="28" lengthAdjust="spacingAndGlyphs">Date</text>
<text class="i" x="530" y="284" textLength="109" lengthAdjust="spacingAndGlyphs">Beginning Balance</text>
<text class="i" x="530" y="304" textLength="53.500" lengthAdjust="spacingAndGlyphs">Income 1</text>
<text class="i" x="530" y="324" textLength="53.500" lengthAdjust="spacingAndGlyphs">Income 2</text>
<text class="b" x="530" y="344" textLength="96" lengthAdjust="spacingAndGlyphs">TOTAL Deposits</text>
<text class="b" x="983" y="344" textLength="33.500" lengthAdjust="spacingAndGlyphs">$0.00</text>
<text class="c" x="530" y="364.500" textLength="163" lengthAdjust="spacingAndGlyphs">Recurring Monthly Expense</text>
<text class="c" x="726" y="364.500" textLength="47" lengthAdjust="spacingAndGlyphs">Amount</text>
<text class="c" x="798" y="364.500" textLength="28" lengthAdjust="spacingAndGlyphs">Date</text>
<text class="i" x="530" y="385" textLength="68" lengthAdjust="spacingAndGlyphs">Credit Card</text>
<text class="i" x="530" y="405" textLength="60.700" lengthAdjust="spacingAndGlyphs">Mortgage</text>
<text class="c" x="530" y="504.500" textLength="100" lengthAdjust="spacingAndGlyphs">TOTAL Recurring</text>
<text class="c" x="894" y="504.500" textLength="34" lengthAdjust="spacingAndGlyphs">$0.00</text>
<text class="c" x="530" y="525" textLength="92.700" lengthAdjust="spacingAndGlyphs">Other Expenses</text>
<text class="c" x="726" y="525" textLength="47" lengthAdjust="spacingAndGlyphs">Amount</text>
<text class="c" x="798" y="525" textLength="28" lengthAdjust="spacingAndGlyphs">Date</text>
<text class="i" x="530" y="545" textLength="32" lengthAdjust="spacingAndGlyphs">Gas 1</text>
<text class="i" x="530" y="565" textLength="32" lengthAdjust="spacingAndGlyphs">Gas 2</text>
<text class="i" x="530" y="585" textLength="111" lengthAdjust="spacingAndGlyphs">Grocery Allowance</text>
<text class="i" x="530" y="605" textLength="53.500" lengthAdjust="spacingAndGlyphs">Spending</text>
<text class="i" x="530" y="624.500" textLength="52.300" lengthAdjust="spacingAndGlyphs" style="fill:#2e9e5e">SAVINGS</text>
<text class="c" x="530" y="704" textLength="136.700" lengthAdjust="spacingAndGlyphs">TOTAL Other Expenses</text>
<text class="c" x="894" y="704" textLength="34" lengthAdjust="spacingAndGlyphs">$0.00</text>
<text class="b" x="530" y="724" textLength="100" lengthAdjust="spacingAndGlyphs">TOTAL Expenses</text>
<text class="b" x="983" y="724" textLength="33.500" lengthAdjust="spacingAndGlyphs">$0.00</text>
<text class="w" x="530" y="745" textLength="47.500" lengthAdjust="spacingAndGlyphs">Balance</text>
<text class="w" x="983" y="745" textLength="33.500" lengthAdjust="spacingAndGlyphs">$0.00</text>

<!-- selection -->
<rect x="27.500" y="750.700" width="215.500" height="19.800" fill="#fff" stroke="#1f6e43" stroke-width="1.800"/>
<rect x="240.500" y="768" width="4.500" height="4.500" fill="#1f6e43"/>

<!-- vertical scrollbar -->
<rect x="1566" y="211" width="22" height="594" fill="#e6e6e6"/>
<rect x="1569.500" y="212.500" width="16" height="16" fill="#fff" stroke="#bdbdbd" stroke-width=".8"/>
<path d="M1574 223H1581L1577.500 218Z" fill="#777"/>
<rect x="1570" y="230" width="15.500" height="522" fill="#fff" stroke="#d0d0d0" stroke-width=".8"/>
<rect x="1570" y="791" width="15.500" height="14" fill="#fff" stroke="#bdbdbd" stroke-width=".8"/>
<path d="M1574 796H1581L1577.500 801Z" fill="#777"/>

<!-- sheet tabs -->
<rect y="805.500" width="1588" height="24" fill="#e6e6e6"/>
<path d="M0 805.500H1566" stroke="#bdbdbd" stroke-width="1"/>
<path d="M27 814L22.500 817.500L27 821ZM46.500 814L51 817.500L46.500 821Z" fill="#c4c4c4"/>
<rect x="85.500" y="805.500" width="71" height="22" fill="#f3f3f3"/>
<rect x="85.500" y="825.500" width="71" height="2.300" fill="#217346"/>
<path d="M85.500 806V827M156.500 806V827" stroke="#c8c8c8"/>
<text x="95" y="820" font-size="14" font-weight="bold" fill="#1f6e43" textLength="51" lengthAdjust="spacingAndGlyphs">January</text>
<text class="s" x="168" y="819.500" textLength="55" lengthAdjust="spacingAndGlyphs">February</text>
<text class="s" x="245" y="819.500" textLength="40.500" lengthAdjust="spacingAndGlyphs">March</text>
<text class="s" x="308" y="819.500" textLength="28" lengthAdjust="spacingAndGlyphs">April</text>
<text class="s" x="359.500" y="819.500" textLength="27.500" lengthAdjust="spacingAndGlyphs">May</text>
<text class="s" x="407" y="819.500" textLength="29.500" lengthAdjust="spacingAndGlyphs">June</text>
<text class="s" x="459" y="819.500" textLength="23" lengthAdjust="spacingAndGlyphs">July</text>
<text class="s" x="504" y="819.500" textLength="45" lengthAdjust="spacingAndGlyphs">August</text>
<text class="s" x="573" y="819.500" textLength="69" lengthAdjust="spacingAndGlyphs">September</text>
<text class="s" x="665" y="819.500" textLength="51" lengthAdjust="spacingAndGlyphs">October</text>
<text class="s" x="739.500" y="819.500" textLength="67" lengthAdjust="spacingAndGlyphs">November</text>
<text class="s" x="828.500" y="819.500" textLength="65" lengthAdjust="spacingAndGlyphs">December</text>
<path d="M235.700 808V826M296.400 808V826M349.500 808V826M397.400 808V826M448 808V826M494 808V826M561 808V826M654.600 808V826M728 808V826M817.600 808V826M904.500 808V826" stroke="#a8a8a8" stroke-width="1"/>
<circle cx="940" cy="817.700" r="7.500" fill="none" stroke="#777" stroke-width="1.100"/>
<path d="M936 817.700H944M940 813.700V821.700" stroke="#666" stroke-width="1.100"/>
<path d="M1335 812V814M1335 816.500V818.500M1335 821V823" stroke="#aaa" stroke-width="2"/>
<rect x="1349.500" y="810" width="15" height="14" fill="#fff" stroke="#c6c6c6" stroke-width=".8"/>
<path d="M1359.500 813.500L1354.500 817L1359.500 820.500Z" fill="#666"/>
<rect x="1365" y="810" width="176" height="14" fill="#fff" stroke="#c6c6c6" stroke-width=".8"/>
<rect x="1552" y="810" width="14" height="14" fill="#fff" stroke="#c6c6c6" stroke-width=".8"/>
<path d="M1557 813.500L1562 817L1557 820.500Z" fill="#666"/>

<!-- status bar -->
<rect y="829" width="1588" height="23" fill="#f3f2f1"/>
<path d="M0 829.300H1588" stroke="#d0d0d0"/>
<rect x="1280.500" y="830" width="41" height="21.500" fill="#d2d0ce"/>
<path d="M1294 835.500H1307V848H1294ZM1294 839.500H1307M1294 843.700H1307M1298.300 835.500V848M1302.700 835.500V848" fill="none" stroke="#444" stroke-width="1"/>
<path d="M1336 835H1349V848.500H1336ZM1339 838.500H1346V845H1339ZM1339.500 840.500H1345.500M1339.500 842.700H1345.500" fill="none" stroke="#555" stroke-width="1"/>
<path d="M1376.500 835H1390.500V847.500H1376.500ZM1376.500 843.500H1390.500M1381.500 835V843.500M1385.500 835V840" fill="none" stroke="#555" stroke-width="1"/>
<path d="M1410 841.500H1417.500" stroke="#555" stroke-width="1.200"/>
<path d="M1423.500 841.500H1526" stroke="#b8b8b8" stroke-width="1"/>
<rect x="1473" y="835" width="4.500" height="12.500" fill="#707070"/>
<path d="M1531.500 841.500H1539.500M1535.500 837.500V845.500" stroke="#555" stroke-width="1.100"/>
<text x="1553" y="846" font-size="11.500" fill="#606060" textLength="26" lengthAdjust="spacingAndGlyphs">100%</text>

<!-- taskbar -->
<rect y="852" width="1588" height="41" fill="#3a3f45"/>
<path d="M0 851.700H1588" stroke="#c8c8c8" stroke-width=".8"/>
<rect y="852" width="49.500" height="41" fill="#3e4247"/>
<path d="M16 865.500L23.700 864.300V871.500H16ZM25 864L33.700 862.800V871.500H25ZM16 873H23.700V880.400L16 879.200ZM25 873H33.700V881.700L25 880.600Z" fill="#fff"/>
<rect x="49.500" y="852" width="355.500" height="41" fill="#f2f2f2"/>
<circle cx="72.500" cy="869" r="5.500" fill="none" stroke="#333" stroke-width="1.200"/>
<path d="M68.500 873L63 879.500" stroke="#333" stroke-width="1.200"/>
<text x="91" y="878" font-size="15.500" fill="#3c3c3c" textLength="135" lengthAdjust="spacingAndGlyphs">Type here to search</text>
<circle cx="430" cy="872.700" r="6.800" fill="none" stroke="#fff" stroke-width="2"/>
<path d="M471.500 868H481.500V877.500H471.500ZM470 865.500H483M470 880H483M486.500 866V868M486.500 871V873M486.500 876V878" fill="none" stroke="#d8d8d8" stroke-width="1.100"/>
<rect x="559" y="852" width="51.500" height="41" fill="#5b6065"/>
<circle cx="531.500" cy="871.500" r="12.500" fill="url(#edge)"/>
<path d="M520 866C524 858 538 856 543 866C545 871 541 875 536 874C538 869 533 866 528 868C524 870 521 872 520 866Z" fill="#6fd48a"/>
<path d="M526 873C527 880 535 883 541 879" fill="none" stroke="#0d4f9a" stroke-width="2.500"/>
<rect x="512" y="890.500" width="41.500" height="2.500" fill="#8cc3ee"/>
<rect x="559" y="890.500" width="51.500" height="2.500" fill="#8cc3ee"/>
<rect x="575" y="860" width="21" height="24" fill="#107c41"/>
<rect x="585.500" y="860" width="10.500" height="8" fill="#33c481"/>
<rect x="575" y="860" width="10.500" height="8" fill="#21a366"/>
<rect x="585.500" y="868" width="10.500" height="8" fill="#21a366"/>
<rect x="575" y="876" width="21" height="8" fill="#185c37"/>
<rect x="571.500" y="866.500" width="12.500" height="12.500" fill="#0e7238"/>
<text x="574.200" y="877" font-size="12" font-weight="bold" fill="#fff">x</text>
<!-- tray -->
<circle cx="1340" cy="872" r="12" fill="#fff"/>
<circle cx="1340" cy="872" r="10" fill="#1b9ad6"/>
<text x="1334.500" y="879" font-size="18" font-weight="bold" fill="#fff">?</text>
<circle cx="1348" cy="878" r="5.500" fill="#d6202a"/>
<text x="1346.500" y="882" font-size="9" font-weight="bold" fill="#fff">!</text>
<path d="M1367 875L1373 869L1379 875" fill="none" stroke="#fff" stroke-width="1.100"/>
<path d="M1398 869H1401L1404.500 866V879L1401 876H1398ZM1407.500 869.500C1409 871 1409 874.500 1407.500 876M1411 867.500C1413.500 870 1413.500 875.500 1411 878" fill="none" stroke="#bcbcbc" stroke-width="1"/>
<path d="M1437 880C1434 878 1436 873 1439 870L1444.500 864M1444.500 864C1446 863.500 1447 865 1446 866.500L1440.500 875C1439 878 1437 880 1437 880ZM1443 870C1447 869 1449 871 1448 873" fill="none" stroke="#e6e6e6" stroke-width="1.100"/>
<text x="1477" y="868" font-size="13.500" fill="#f0f0f0" textLength="43" lengthAdjust="spacingAndGlyphs">2:17 PM</text>
<text x="1470" y="887" font-size="13.500" fill="#f0f0f0" textLength="57" lengthAdjust="spacingAndGlyphs">9/23/2020</text>
<path d="M1546 865H1562V877H1557L1552 881V877H1546Z" fill="#f0f0f0"/>
<path d="M1549 868.500H1559M1549 871.500H1559M1549 874.500H1555" stroke="#3a3f45" stroke-width="1"/>
<circle cx="1561" cy="879.500" r="8" fill="#3a3f45" stroke="#888" stroke-width="1"/>
<text x="1557.300" y="884" font-size="11.500" font-weight="bold" fill="#fff">2</text>
</svg>
</body></html>
